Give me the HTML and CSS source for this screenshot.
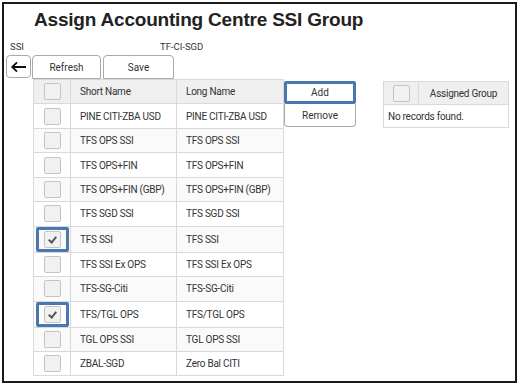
FILE: index.html
```html
<!DOCTYPE html>
<html lang="en">
<head>
    <meta charset="UTF-8">
    <title>Assign Accounting Centre SSI Group</title>
    <link rel="stylesheet" href="styles.css">
</head>
<body>

    <div class="frame">
        <h1 class="titulo">Assign Accounting Centre SSI Group</h1>

        <div class="meta">
            <span class="meta-ssi">SSI</span>
            <span class="meta-code">TF-CI-SGD</span>
        </div>

        <div class="toolbar">
            <button class="btn btn-back">
                <svg width="17" height="12" viewBox="0 0 17 12">
                    <path d="M16 6H2.5M7 1.3L2.2 6 7 10.7" fill="none" stroke="#111" stroke-width="1.8"/>
                </svg>
            </button>
            <button class="btn btn-refresh">Refresh</button>
            <button class="btn btn-save">Save</button>
        </div>

        <div class="area">
            <table class="grid grid-left">
                <tr class="head">
                    <td class="col-chk"><span class="chk"></span></td>
                    <td class="col-short">Short Name</td>
                    <td class="col-long">Long Name</td>
                </tr>
                <tr><td class="col-chk"><span class="chk"></span></td><td>PINE CITI-ZBA USD</td><td>PINE CITI-ZBA USD</td></tr>
                <tr><td class="col-chk"><span class="chk"></span></td><td>TFS OPS SSI</td><td>TFS OPS SSI</td></tr>
                <tr><td class="col-chk"><span class="chk"></span></td><td>TFS OPS+FIN</td><td>TFS OPS+FIN</td></tr>
                <tr><td class="col-chk"><span class="chk"></span></td><td>TFS OPS+FIN (GBP)</td><td>TFS OPS+FIN (GBP)</td></tr>
                <tr><td class="col-chk"><span class="chk"></span></td><td>TFS SGD SSI</td><td>TFS SGD SSI</td></tr>
                <tr><td class="col-chk"><span class="ring"><span class="chk checked"></span></span></td><td>TFS SSI</td><td>TFS SSI</td></tr>
                <tr><td class="col-chk"><span class="chk"></span></td><td>TFS SSI Ex OPS</td><td>TFS SSI Ex OPS</td></tr>
                <tr><td class="col-chk"><span class="chk"></span></td><td>TFS-SG-Citi</td><td>TFS-SG-Citi</td></tr>
                <tr><td class="col-chk"><span class="ring"><span class="chk checked"></span></span></td><td>TFS/TGL OPS</td><td>TFS/TGL OPS</td></tr>
                <tr><td class="col-chk"><span class="chk"></span></td><td>TGL OPS SSI</td><td>TGL OPS SSI</td></tr>
                <tr><td class="col-chk"><span class="chk"></span></td><td>ZBAL-SGD</td><td>Zero Bal CITI</td></tr>
            </table>

            <div class="acoes">
                <button class="btn btn-add">Add</button>
                <button class="btn btn-remove">Remove</button>
            </div>

            <table class="grid grid-right">
                <tr class="head">
                    <td class="col-chk2"><span class="chk"></span></td>
                    <td class="col-group">Assigned Group</td>
                </tr>
                <tr><td colspan="2" class="vazio">No records found.</td></tr>
            </table>
        </div>
    </div>

</body>
</html>
```

FILE: styles.css
```css
body {
    margin: 0;
    padding: 0;
    background-color: #fff;
    font-family: Roboto, "Liberation Sans", sans-serif;
    color: #333;
}

.frame {
    margin: 2px 0 0 2px;
    width: 511px;
    height: 377px;
    border: 2px solid #1a1a1a;
}

.titulo {
    margin: 0 0 0 30px;
    height: 30px;
    line-height: 31px;
    font-family: "Liberation Sans", Arial, sans-serif;
    font-size: 19px;
    font-weight: bold;
    color: #222;
    letter-spacing: -0.2px;
}

.meta {
    position: relative;
    height: 21px;
    font-size: 9.5px;
    line-height: 14px;
    color: #333;
}

.meta-ssi {
    position: absolute;
    left: 6px;
    top: 6px;
}

.meta-code {
    position: absolute;
    left: 156px;
    top: 6px;
}

.toolbar {
    display: flex;
    height: 24px;
    padding-left: 2px;
}

.btn {
    font-family: Roboto, "Liberation Sans", sans-serif;
    font-size: 10px;
    color: #333;
    background-color: #fff;
    border: 1px solid #a9a9a9;
    border-radius: 4px;
    padding: 0;
    height: 24px;
}

.btn-back {
    width: 25px;
    height: 23px;
    display: flex;
    align-items: center;
    justify-content: center;
}

.btn-refresh {
    width: 69px;
    margin-left: 1px;
    border-bottom-left-radius: 0;
    border-bottom-right-radius: 0;
}

.btn-save {
    width: 71px;
    margin-left: 2px;
    border-bottom-left-radius: 0;
    border-bottom-right-radius: 0;
}

.area {
    display: flex;
    align-items: flex-start;
    padding-left: 29px;
}

.grid {
    border-collapse: collapse;
    font-size: 10px;
    color: #333;
    flex-shrink: 0;
}

.grid td {
    border: 1px solid #d9d9d9;
    padding: 0 0 0 9px;
    box-sizing: border-box;
    white-space: nowrap;
    letter-spacing: -0.25px;
}

.grid tr {
    height: 24.45px;
    background-color: #fff;
}

.grid tr:nth-child(odd) {
    background-color: #fafafa;
}

.grid tr.head {
    background-color: #efefef;
}

.grid-left {
    width: 250px;
    table-layout: fixed;
}

.col-chk {
    width: 37px;
}

.grid td.col-chk,
.grid td.col-chk2 {
    padding: 0;
    text-align: center;
}

.col-short {
    width: 106px;
}

.col-long {
    width: 107px;
}

.chk {
    display: inline-block;
    width: 15px;
    height: 15px;
    border: 1px solid #c4c4c4;
    border-radius: 2px;
    background-color: #f1f1f1;
    vertical-align: middle;
    position: relative;
}

.checked::after {
    content: "";
    position: absolute;
    left: 5px;
    top: 3px;
    width: 3px;
    height: 6px;
    border: solid #555;
    border-width: 0 2px 2px 0;
    transform: rotate(40deg);
}

.ring {
    display: inline-block;
    padding: 1px 5px;
    border: 3px solid #4a77ad;
    border-radius: 2px;
    vertical-align: middle;
    margin-left: 1px;
}

.ring .chk {
    display: block;
}

.acoes {
    display: flex;
    flex-direction: column;
    margin-top: 2px;
}

.btn-add {
    width: 72px;
    height: 23px;
    border: 3px solid #4a77ad;
    border-radius: 2px;
}

.btn-remove {
    width: 72px;
    height: 23px;
    border-top: none;
    border-top-left-radius: 0;
    border-top-right-radius: 0;
}

.grid-right {
    margin-left: 27px;
    margin-top: 2px;
    width: 126px;
    table-layout: fixed;
}

.col-chk2 {
    width: 35px;
}

.grid-right tr {
    height: 23px;
}

.col-group {
    text-align: center;
    padding: 0 !important;
}

.grid-right .vazio {
    background-color: #fff;
    padding-left: 4px;
}
```
